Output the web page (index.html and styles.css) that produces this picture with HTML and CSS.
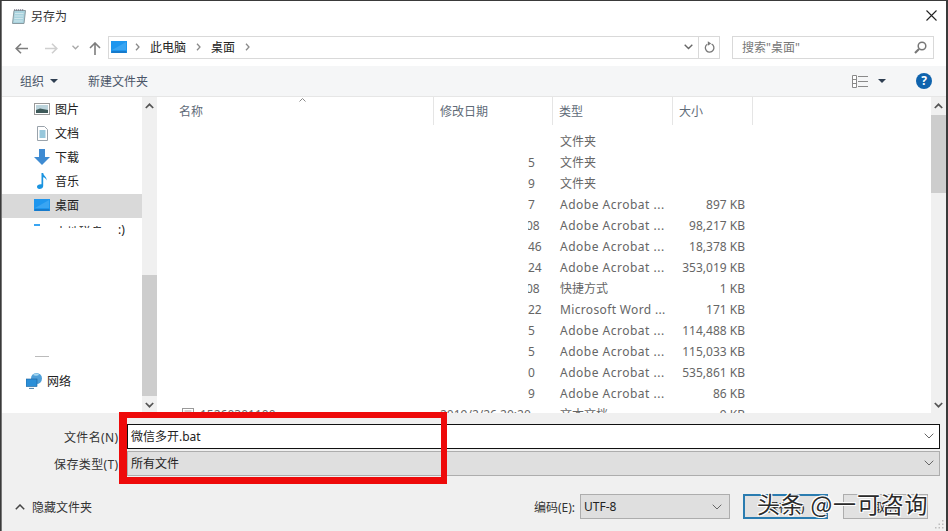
FILE: index.html
```html
<!DOCTYPE html>
<html lang="zh-CN">
<head>
<meta charset="utf-8">
<title>另存为</title>
<link rel="stylesheet" href="styles.css">
</head>
<body>
<div class="screen">
  <div class="dialog">
    <header class="titlebar">
      <svg class="title-icon" width="16" height="16" viewBox="0 0 16 16"><path d="M3 2.5h11.500l-1.500 13H1.500z" fill="#a9d3de" stroke="#8a9aa0"/><path d="M3.5 2.5l.3-1.500M5.500 2.500l.3-1.500M7.500 2.500l.3-1.500M9.500 2.500l.3-1.500M11.500 2.500l.3-1.500" stroke="#667" stroke-width=".8"/><path d="M4 5.500h8.500M3.700 8h8.500M3.400 10.500h8.500M3.100 13h8.500" stroke="#cfe6ec"/></svg>
      <span class="title-text">另存为</span>
      <svg class="close" width="11" height="11" viewBox="0 0 11 11"><path d="M.5.500l10 10M10.500.500l-10 10" stroke="#222" stroke-width="1.100" fill="none"/></svg>
    </header>

    <div class="navbar">
      <svg class="nav-back" width="13" height="11" viewBox="0 0 13 11"><path d="M6 .700L1.200 5.500 6 10.300M1.500 5.500H13" stroke="#7d7d7d" stroke-width="1.600" fill="none"/></svg>
      <svg class="nav-fwd" width="13" height="11" viewBox="0 0 13 11"><path d="M7 .700l4.800 4.800L7 10.300M11.500 5.500H0" stroke="#cfcfcf" stroke-width="1.600" fill="none"/></svg>
      <svg class="nav-down" width="7" height="5" viewBox="0 0 7 5"><path d="M.5.800l3 3 3-3" stroke="#a8a8a8" stroke-width="1.300" fill="none"/></svg>
      <svg class="nav-up" width="12" height="13" viewBox="0 0 12 13"><path d="M1 6l5-5 5 5M6 1.500V13" stroke="#7d7d7d" stroke-width="1.600" fill="none"/></svg>
      <div class="crumbs">
        <svg class="crumb-desk" width="16" height="12" viewBox="0 0 16 12"><rect width="16" height="12" fill="#1e96ee"/><rect x=".5" y="10.500" width="15" height="1" fill="#0f5fa8"/><path d="M1 9L15 1v8z" fill="#3aa5f2"/></svg>
        <svg class="chev" width="5" height="8" viewBox="0 0 5 8"><path d="M1 .700L4 4 1 7.300" stroke="#8a8a8a" stroke-width="1.300" fill="none"/></svg>
        <span class="crumb">此电脑</span>
        <svg class="chev" width="5" height="8" viewBox="0 0 5 8"><path d="M1 .700L4 4 1 7.300" stroke="#8a8a8a" stroke-width="1.300" fill="none"/></svg>
        <span class="crumb">桌面</span>
        <svg class="chev" width="5" height="8" viewBox="0 0 5 8"><path d="M1 .700L4 4 1 7.300" stroke="#8a8a8a" stroke-width="1.300" fill="none"/></svg>
        <span class="grow"></span>
        <svg class="crumb-drop" width="9" height="6" viewBox="0 0 9 6"><path d="M.7.800L4.500 4.600 8.300.800" stroke="#666" stroke-width="1.400" fill="none"/></svg>
        <span class="crumb-refresh">
          <svg width="11" height="12" viewBox="0 0 11 12"><path d="M7.600 3A4.300 4.300 0 1 1 3.300 3.200" stroke="#777" stroke-width="1.300" fill="none"/><path d="M3.800.200v4.500L7.200 2.400z" fill="#777"/></svg>
        </span>
      </div>
      <div class="search">
        <span class="search-text">搜索"桌面"</span>
        <svg width="13" height="13" viewBox="0 0 13 13"><circle cx="8" cy="5" r="3.800" fill="none" stroke="#777" stroke-width="1.500"/><path d="M5 8l-4 4" stroke="#777" stroke-width="2.200"/></svg>
      </div>
    </div>

    <div class="toolbar">
      <span class="tool">组织</span>
      <svg class="caret" width="8" height="4" viewBox="0 0 8 4"><path d="M0 0h8L4 4z" fill="#2f3f52"/></svg>
      <span class="tool tool-new">新建文件夹</span>
      <span class="grow"></span>
      <svg class="view" width="16" height="13" viewBox="0 0 16 13"><path d="M.5.500h4v12h-4zM.5 4.500h4M.5 8.500h4" fill="#fff" stroke="#8a8a8a"/><path d="M6 1.500h10M6 6.500h10M6 11.500h10" stroke="#8a8a8a" stroke-width="1"/></svg>
      <svg class="caret caret-view" width="8" height="4" viewBox="0 0 8 4"><path d="M0 0h8L4 4z" fill="#2f3f52"/></svg>
      <span class="help">?</span>
    </div>

    <div class="main">
      <nav class="tree">
        <div class="tree-row">
          <svg class="tree-icon" width="16" height="12" viewBox="0 0 16 12"><rect x=".5" y=".5" width="15" height="11" fill="#fff" stroke="#9a9a9a"/><rect x="2" y="2" width="12" height="8" fill="#bcd4dc"/><path d="M2 7l4-1.500 8 1.500v3H2z" fill="#3e5a5a"/></svg>
          <span>图片</span>
        </div>
        <div class="tree-row">
          <svg class="tree-icon" width="16" height="15" viewBox="0 0 16 15"><path d="M3.500.500h7l3 3v11h-10z" fill="#fff" stroke="#9aa3ab"/><path d="M5.500 5h6M5.500 7h6M5.500 9h6M5.500 11h6" stroke="#2f8fb8"/></svg>
          <span>文档</span>
        </div>
        <div class="tree-row">
          <svg class="tree-icon" width="16" height="16" viewBox="0 0 16 16"><path d="M5 0h6v8h5l-8 8-8-8h5z" fill="#3f8bd2"/></svg>
          <span>下载</span>
        </div>
        <div class="tree-row">
          <svg class="tree-icon" width="16" height="16" viewBox="0 0 16 16"><path d="M7.500 0h1.700c.4 3 3.800 3.500 3.300 7.500-.4-2-2-3-3.300-3.300V13c0 1.800-1.800 3-3.700 3S3 15 3 13.500 4.800 11 7.500 11.200z" fill="#1a94e0"/></svg>
          <span>音乐</span>
        </div>
        <div class="tree-row tree-row-on">
          <svg class="tree-icon" width="16" height="12" viewBox="0 0 16 12"><rect width="16" height="12" fill="#1e96ee"/><rect x=".5" y="10.500" width="15" height="1" fill="#0f5fa8"/><path d="M1 9L15 1v8z" fill="#3aa5f2"/></svg>
          <span>桌面</span>
        </div>
        <div class="tree-row tree-row-cut">
          <span class="tree-icon tree-bit"></span>
          <span class="cut-text">本地磁盘 (C</span><span class="cut-end">:)</span>
        </div>
        <div class="tree-gap"><span class="tree-dash"></span></div>
        <div class="tree-row tree-row-net">
          <svg class="tree-icon" width="16" height="16" viewBox="0 0 16 16"><circle cx="10.500" cy="5.500" r="5.500" fill="#4f9fd8"/><path d="M7 2c2-2 5-2 6 0-2 1-4 1-6 0z" fill="#a8d8f0"/><rect y="6" width="11" height="7.500" fill="#2b8fd8" stroke="#1a5f9a" stroke-width=".6"/><path d="M3 15.500h5" stroke="#5a8ab0" stroke-width="1.200"/></svg>
          <span>网络</span>
        </div>
      </nav>
      <div class="scroll scroll-tree">
        <span class="arrow"><svg width="9" height="6" viewBox="0 0 9 6"><path d="M.8 5l3.700-3.700L8.200 5" stroke="#555" stroke-width="1.700" fill="none"/></svg></span>
        <span class="scroll-space scroll-space-tree"></span>
        <span class="thumb thumb-tree"></span>
        <span class="arrow"><svg width="9" height="6" viewBox="0 0 9 6"><path d="M.8 1l3.700 3.700L8.200 1" stroke="#555" stroke-width="1.700" fill="none"/></svg></span>
      </div>

      <section class="files">
        <div class="head">
          <span class="head-cell head-name">名称<svg class="sort" width="7" height="4" viewBox="0 0 7 4"><path d="M.5 3.500l3-3 3 3" stroke="#888" fill="none"/></svg></span>
          <span class="head-cell head-date">修改日期</span>
          <span class="head-cell head-type">类型</span>
          <span class="head-cell head-size">大小</span>
        </div>
        <div class="rows">
          <div class="row"><span></span><span class="date"></span><span>文件夹</span><span class="size"></span></div>
          <div class="row"><span></span><span class="date">5</span><span>文件夹</span><span class="size"></span></div>
          <div class="row"><span></span><span class="date">9</span><span>文件夹</span><span class="size"></span></div>
          <div class="row"><span></span><span class="date">7</span><span class="wide">Adobe Acrobat ...</span><span class="size">897 KB</span></div>
          <div class="row"><span></span><span class="date date-cut">08</span><span class="wide">Adobe Acrobat ...</span><span class="size">98,217 KB</span></div>
          <div class="row"><span></span><span class="date">46</span><span class="wide">Adobe Acrobat ...</span><span class="size">18,378 KB</span></div>
          <div class="row"><span></span><span class="date">24</span><span class="wide">Adobe Acrobat ...</span><span class="size">353,019 KB</span></div>
          <div class="row"><span></span><span class="date date-cut">08</span><span>快捷方式</span><span class="size">1 KB</span></div>
          <div class="row"><span></span><span class="date">22</span><span class="wide-word">Microsoft Word ...</span><span class="size">171 KB</span></div>
          <div class="row"><span></span><span class="date">5</span><span class="wide">Adobe Acrobat ...</span><span class="size">114,488 KB</span></div>
          <div class="row"><span></span><span class="date">5</span><span class="wide">Adobe Acrobat ...</span><span class="size">115,033 KB</span></div>
          <div class="row"><span></span><span class="date">0</span><span class="wide">Adobe Acrobat ...</span><span class="size">535,861 KB</span></div>
          <div class="row"><span></span><span class="date">9</span><span class="wide">Adobe Acrobat ...</span><span class="size">86 KB</span></div>
          <div class="row">
            <span class="file-name"><svg width="12" height="13" viewBox="0 0 12 13"><rect x=".5" y=".5" width="11" height="12" fill="#fff" stroke="#9a9a9a"/><path d="M2.500 3h7M2.500 5h7" stroke="#aaa"/></svg>15260301100</span>
            <span class="date date-full">2019/2/26 20:20</span><span>文本文档</span><span class="size">9 KB</span>
          </div>
        </div>
      </section>
      <div class="scroll scroll-list">
        <span class="arrow"><svg width="9" height="6" viewBox="0 0 9 6"><path d="M.8 5l3.700-3.700L8.200 5" stroke="#555" stroke-width="1.700" fill="none"/></svg></span>
        <span class="thumb thumb-list"></span>
        <span class="scroll-space"></span>
        <span class="arrow"><svg width="9" height="6" viewBox="0 0 9 6"><path d="M.8 1l3.700 3.700L8.200 1" stroke="#555" stroke-width="1.700" fill="none"/></svg></span>
      </div>
    </div>

    <footer class="bottom">
      <div class="fields">
        <label class="field-label">文件名(N):</label>
        <div class="combo combo-active"><span>微信多开.bat</span><svg width="10" height="6" viewBox="0 0 10 6"><path d="M.7.700L5 5 9.300.700" stroke="#666" fill="none"/></svg></div>
        <label class="field-label">保存类型(T):</label>
        <div class="combo combo-plain"><span>所有文件</span><svg width="10" height="6" viewBox="0 0 10 6"><path d="M.7.700L5 5 9.300.700" stroke="#666" fill="none"/></svg></div>
      </div>
      <div class="actions">
        <svg class="hide-chev" width="10" height="6" viewBox="0 0 10 6"><path d="M.8 5.200L5 1l4.200 4.200" stroke="#444" stroke-width="1.500" fill="none"/></svg>
        <span class="hide-text">隐藏文件夹</span>
        <span class="grow"></span>
        <span class="enc-label">编码(E):</span>
        <div class="combo combo-plain combo-enc"><span>UTF-8</span><svg width="10" height="6" viewBox="0 0 10 6"><path d="M.7.700L5 5 9.300.700" stroke="#666" fill="none"/></svg></div>
        <button class="btn btn-default">保存(S)</button>
        <button class="btn">取消</button>
      </div>
      <svg class="grip" width="10" height="10" viewBox="0 0 10 10"><path d="M8 1h1.500v1.500H8zM8 4.500h1.500V6H8zM8 8h1.500v1.500H8zM4.500 4.500H6V6H4.500zM4.500 8H6v1.500H4.500zM1 8h1.500v1.500H1z" fill="#bdbdbd"/></svg>
    </footer>
  </div>
  <div class="redbox"></div>
  <div class="watermark">头条 @一可咨询</div>
</div>
</body>
</html>
```

FILE: styles.css
```css
* { box-sizing: border-box; }
html, body { margin: 0; padding: 0; }
body {
  width: 948px;
  height: 531px;
  overflow: hidden;
  background: #3a3a3a;
  font-family: "Noto Sans", "Noto Sans CJK SC", sans-serif;
  font-size: 12px;
  color: #333;
}
.screen {
  position: relative;
  width: 948px;
  height: 531px;
  padding: 1px 2px 0 1px;
}
.dialog {
  height: 530px;
  display: flex;
  flex-direction: column;
  background: #fff;
  border-left: 1px solid #777;
}
.grow { flex: 1; }

.titlebar {
  height: 31px;
  flex: none;
  display: flex;
  align-items: center;
  padding: 0 9px 2px 9px;
}
.title-text { margin-left: 4px; color: #333; }
.close { margin-left: auto; }

.navbar {
  height: 34px;
  flex: none;
  display: flex;
  align-items: flex-start;
  padding: 4px 0 0 13px;
}
.navbar > svg { margin-top: 7px; }
.nav-back { margin-right: 17px; }
.nav-fwd { margin-right: 14px; }
.nav-down { margin-top: 9px !important; margin-right: 10px; }
.nav-up { margin-top: 6px !important; margin-right: 7px; }
.crumbs {
  width: 612px;
  height: 23px;
  display: flex;
  align-items: center;
  border: 1px solid #d9d9d9;
  padding: 0 0 1px 2px;
}
.crumb { color: #222; }
.chev { margin: 0 10px; }
.crumb-desk { margin-right: -2px; }
.crumb-drop { margin-right: 5px; }
.crumb-refresh {
  width: 21px;
  height: 21px;
  display: flex;
  align-items: center;
  justify-content: center;
  border-left: 1px solid #d9d9d9;
}
.search {
  width: 202px;
  height: 23px;
  margin-left: 12px;
  display: flex;
  align-items: center;
  justify-content: space-between;
  border: 1px solid #d9d9d9;
  padding: 0 6px 1px 9px;
}
.search-text { color: #777; }

.toolbar {
  height: 31px;
  flex: none;
  display: flex;
  align-items: center;
  padding-left: 18px;
  background: #f5f6f7;
  border-bottom: 1px solid #e6e6e6;
}
.tool { color: #4a5568; }
.caret { margin-left: 6px; }
.tool-new { margin-left: 30px; }
.caret-view { margin-left: 10px; }
.help {
  width: 16px;
  height: 16px;
  margin: 0 14px 0 30px;
  border-radius: 50%;
  background: #0f63ad;
  color: #fff;
  font-weight: 700;
  font-size: 12px;
  line-height: 16px;
  text-align: center;
}

.main {
  height: 316px;
  flex: none;
  display: flex;
  background: #fff;
}
.tree {
  width: 140px;
  flex: none;
  display: flex;
  flex-direction: column;
  overflow: hidden;
  padding-top: 1px;
}
.tree-row {
  height: 24px;
  flex: none;
  display: flex;
  align-items: center;
  padding-left: 32px;
  padding-bottom: 2px;
  color: #222;
}
.tree-icon { width: 16px; flex: none; margin-right: 5px; }
.tree-row-on { background: #d9d9d9; }
.tree-row-net { padding-left: 24px; padding-bottom: 0; }
.tree-gap { height: 127px; flex: none; padding: 114px 0 0 33px; }
.tree-dash { display: block; width: 14px; height: 1px; background: #bbb; }
.tree-bit { height: 2px; background: #3aa5f2; align-self: flex-start; margin-top: 6px; width: 6px; margin-right: 15px; }
.cut-text {
  height: 4px;
  overflow: hidden;
  align-self: flex-start;
  margin-top: 6px;
  line-height: 17px;
  display: block;
  width: 63px;
  white-space: nowrap;
}
.cut-end { color: #222; }

.scroll {
  width: 15px;
  flex: none;
  display: flex;
  flex-direction: column;
  background: #f0f0f0;
}
.scroll-tree { margin-right: 0; }
.arrow {
  height: 17px;
  flex: none;
  display: flex;
  align-items: center;
  justify-content: center;
}
.scroll-space { flex: 1; }
.scroll-space-tree { flex: none; height: 161px; }
.thumb { display: block; flex: none; background: #cdcdcd; }
.thumb-tree { flex: 1; }
.thumb-list { height: 78px; margin-top: 1px; }

.files {
  flex: 1;
  min-width: 0;
  overflow: hidden;
}
.head {
  height: 28px;
  display: grid;
  grid-template-columns: 277px 119px 120px 80px;
  color: #5f6b78;
}
.head-cell {
  position: relative;
  display: flex;
  align-items: center;
  padding-left: 6px;
  border-right: 1px solid #e5e5e5;
}
.head-name { padding-left: 22px; }
.sort { position: absolute; left: 142px; top: 1px; }
.rows { padding-top: 6px; height: 288px; overflow: hidden; }
.row {
  height: 21px;
  display: grid;
  grid-template-columns: 277px 126px 113px 72px;
  align-items: center;
  color: #666;
  line-height: 21px;
  white-space: nowrap;
}
.date { margin-left: 94px; overflow: hidden; }
.date-cut { text-indent: -2px; }
.date-full { margin-left: 6px; }
.size { text-align: right; }
.wide { letter-spacing: .5px; }
.wide-word { letter-spacing: .35px; }
.file-name { display: flex; align-items: center; gap: 6px; padding-left: 25px; }

.bottom {
  position: relative;
  flex: 1;
  background: #f0f0f0;
  padding-top: 11px;
}
.fields {
  display: grid;
  grid-template-columns: 120px 813px;
  column-gap: 5px;
  row-gap: 2px;
  grid-auto-rows: 25px;
}
.field-label {
  display: flex;
  align-items: center;
  justify-content: flex-end;
  color: #333;
  white-space: nowrap;
  letter-spacing: .35px;
}
.combo {
  display: flex;
  align-items: center;
  justify-content: space-between;
  padding: 0 5px 2px 3px;
  color: #222;
}
.combo-active { background: #fff; border: 1px solid #111; }
.combo-plain { background: #dfdfdf; border: 1px solid #adadad; }
.combo-enc { width: 150px; margin-left: 5px; padding-right: 7px; padding-bottom: 0; }
.actions {
  height: 25px;
  margin-top: 18px;
  display: flex;
  align-items: center;
  padding: 0 18px 0 13px;
}
.actions .combo { height: 25px; }
.hide-text { margin-left: 7px; color: #333; }
.enc-label { color: #333; }
.btn {
  width: 85px;
  height: 25px;
  margin-left: 15px;
  padding: 0;
  background: #e1e1e1;
  border: 1px solid #adadad;
  font: inherit;
  color: #222;
}
.combo-enc + .btn { margin-left: 13px; }
.btn-default { border: 2px solid #2a7cb0; }
.grip { position: absolute; right: 2px; bottom: 2px; }

.redbox {
  position: absolute;
  left: 119px;
  top: 412px;
  width: 328px;
  height: 72px;
  border-style: solid;
  border-color: #ee0a0a;
  border-width: 6px 6px 7px 8px;
}
.watermark {
  position: absolute;
  left: 757px;
  top: 487px;
  font-size: 23px;
  line-height: 32px;
  letter-spacing: .8px;
  color: #2b2b2b;
  white-space: nowrap;
  font-family: "Noto Sans CJK SC", sans-serif;
  font-weight: 400;
  text-shadow: 1px 1px 0 #fff, -1px -1px 0 #fff, 1px -1px 0 #fff, -1px 1px 0 #fff;
}
```
